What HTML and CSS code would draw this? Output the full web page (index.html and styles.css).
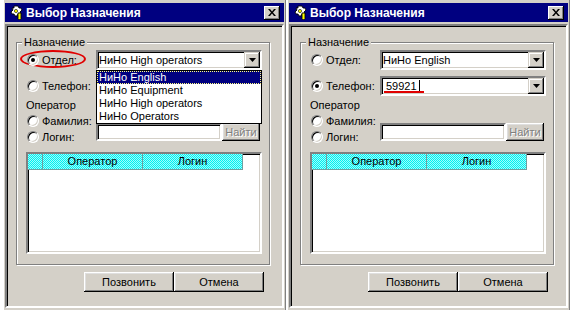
FILE: index.html
```html
<!DOCTYPE html>
<html lang="ru">
<head>
    <meta charset="UTF-8">
    <meta name="viewport" content="width=device-width, initial-scale=1.0">
    <title>Выбор Назначения</title>
    <link rel="stylesheet" href="styles.css">
</head>
<body>
    <div class="desk">
        <!-- окно 1: выбран отдел, список открыт -->
        <div class="window">
            <div class="titlebar">
                <svg class="app-icon" width="14" height="16" viewBox="0 0 14 16">
                    <path d="M4 1h4l1 2h2l1 2-2 2 1 2H8l-1 2H5L4 9H2L1 7l2-2-1-2h2z" fill="#fff" stroke="#000" stroke-width=".9"/>
                    <path d="M8 8h3v5.5L9.5 15 8 13.5z" fill="#ff0" stroke="#000" stroke-width=".9"/>
                    <circle cx="6" cy="6" r="1.6" fill="#ff0" stroke="#000" stroke-width=".6"/>
                </svg>
                <span class="title">Выбор Назначения</span>
                <div class="close">
                    <svg width="8" height="7" viewBox="0 0 8 7"><path d="M0 0h2l2 2.4L6 0h2L5 3.5 8 7H6L4 4.6 2 7H0l3-3.5z" fill="#000"/></svg>
                </div>
            </div>
            <div class="client">
                <fieldset class="group">
                    <legend>Назначение</legend>
                    <div class="row">
                        <div class="mark"></div>
                        <label class="choice"><span class="radio checked"></span>Отдел:</label>
                        <div class="combo field">
                            <span class="combo-text">НиНо High operators</span>
                            <span class="drop-btn"><svg width="7" height="4" viewBox="0 0 7 4"><path d="M0 0h7L3.5 4z" fill="#000"/></svg></span>
                            <ul class="dropdown">
                                <li class="selected">НиНо English</li>
                                <li>НиНо Equipment</li>
                                <li>НиНо High operators</li>
                                <li>НиНо Operators</li>
                            </ul>
                        </div>
                    </div>
                    <div class="row">
                        <label class="choice"><span class="radio"></span>Телефон:</label>
                        <div class="combo field">
                            <span class="combo-text"></span>
                            <span class="drop-btn"><svg width="7" height="4" viewBox="0 0 7 4"><path d="M0 0h7L3.5 4z" fill="#000"/></svg></span>
                        </div>
                    </div>
                    <div class="op-label">Оператор</div>
                    <div class="op">
                        <div class="op-choices">
                            <label class="op-choice"><span class="radio"></span>Фамилия:</label>
                            <label class="op-choice"><span class="radio"></span>Логин:</label>
                        </div>
                        <div class="search">
                            <div class="search-input field"></div>
                            <button class="btn find" disabled>Найти</button>
                        </div>
                    </div>
                    <div class="grid field">
                        <div class="grid-head">
                            <div class="cell first"></div>
                            <div class="cell">Оператор</div>
                            <div class="cell">Логин</div>
                        </div>
                    </div>
                </fieldset>
                <div class="actions">
                    <button class="btn">Позвонить</button>
                    <button class="btn">Отмена</button>
                </div>
            </div>
        </div>

        <!-- окно 2: выбран телефон -->
        <div class="window">
            <div class="titlebar">
                <svg class="app-icon" width="14" height="16" viewBox="0 0 14 16">
                    <path d="M4 1h4l1 2h2l1 2-2 2 1 2H8l-1 2H5L4 9H2L1 7l2-2-1-2h2z" fill="#fff" stroke="#000" stroke-width=".9"/>
                    <path d="M8 8h3v5.5L9.5 15 8 13.5z" fill="#ff0" stroke="#000" stroke-width=".9"/>
                    <circle cx="6" cy="6" r="1.6" fill="#ff0" stroke="#000" stroke-width=".6"/>
                </svg>
                <span class="title">Выбор Назначения</span>
                <div class="close">
                    <svg width="8" height="7" viewBox="0 0 8 7"><path d="M0 0h2l2 2.4L6 0h2L5 3.5 8 7H6L4 4.6 2 7H0l3-3.5z" fill="#000"/></svg>
                </div>
            </div>
            <div class="client">
                <fieldset class="group">
                    <legend>Назначение</legend>
                    <div class="row">
                        <label class="choice"><span class="radio"></span>Отдел:</label>
                        <div class="combo field">
                            <span class="combo-text">НиНо English</span>
                            <span class="drop-btn"><svg width="7" height="4" viewBox="0 0 7 4"><path d="M0 0h7L3.5 4z" fill="#000"/></svg></span>
                        </div>
                    </div>
                    <div class="row">
                        <label class="choice"><span class="radio checked"></span>Телефон:</label>
                        <div class="combo field">
                            <span class="combo-text phone">59921<span class="caret"></span></span>
                            <span class="underline"></span>
                            <span class="drop-btn"><svg width="7" height="4" viewBox="0 0 7 4"><path d="M0 0h7L3.5 4z" fill="#000"/></svg></span>
                        </div>
                    </div>
                    <div class="op-label">Оператор</div>
                    <div class="op">
                        <div class="op-choices">
                            <label class="op-choice"><span class="radio"></span>Фамилия:</label>
                            <label class="op-choice"><span class="radio"></span>Логин:</label>
                        </div>
                        <div class="search">
                            <div class="search-input field"></div>
                            <button class="btn find" disabled>Найти</button>
                        </div>
                    </div>
                    <div class="grid field">
                        <div class="grid-head">
                            <div class="cell first"></div>
                            <div class="cell">Оператор</div>
                            <div class="cell">Логин</div>
                        </div>
                    </div>
                </fieldset>
                <div class="actions">
                    <button class="btn">Позвонить</button>
                    <button class="btn">Отмена</button>
                </div>
            </div>
        </div>
    </div>
</body>
</html>
```

FILE: styles.css
```css
body {
    margin: 0;
    background-color: #ffffff;
    font-family: "Liberation Sans", Arial, sans-serif;
    font-size: 11px;
    color: #000;
}

.desk {
    display: flex;
    gap: 2px;
    padding-left: 4px;
}

.window {
    width: 282px;
    height: 310px;
    box-sizing: border-box;
    background-color: #d4d0c8;
    border-right: 1px solid #808080;
    padding: 3px 1px 2px 1px;
}

.titlebar {
    height: 19px;
    background-color: #000080;
    color: white;
    display: flex;
    align-items: center;
    gap: 2px;
    padding: 0 4px 0 5px;
    font-weight: bold;
    font-size: 12px;
}

.title {
    flex: 1;
}

.close {
    width: 16px;
    height: 14px;
    background-color: #d4d0c8;
    box-shadow: inset -1px -1px #000, inset 1px 1px #fff, inset -2px -2px #808080;
    display: flex;
    align-items: center;
    justify-content: center;
}

.client {
    margin-top: 2px;
    height: 284px;
    box-sizing: border-box;
    border: 2px solid;
    border-color: #808080 #fff #fff #808080;
    box-shadow: inset 1px 1px #000, inset -1px -1px #d4d0c8;
    padding: 10px 0 0 9px;
}

.group {
    width: 254px;
    box-sizing: border-box;
    margin: 0;
    min-width: 0;
    border: 1px solid #808080;
    box-shadow: 1px 1px #fff, inset 1px 1px #fff;
    padding: 1px 7px 10px 9px;
}

.group legend {
    margin-left: -4px;
    padding: 0 2px;
    line-height: 13px;
    background-color: #d4d0c8;
}

.row {
    position: relative;
    display: flex;
    align-items: center;
    height: 20px;
}

.row + .row {
    margin-top: 6px;
}

.choice,
.op-choice {
    display: flex;
    align-items: center;
    gap: 3px;
}

.choice {
    width: 70px;
}

.radio {
    position: relative;
    width: 12px;
    height: 12px;
    box-sizing: border-box;
    margin-left: 1px;
    border-radius: 50%;
    background-color: #fff;
    border: 1px solid;
    border-color: #808080 #fff #fff #808080;
    box-shadow: inset 1px 1px #000, inset -1px -1px #d4d0c8;
}

.radio.checked::after {
    content: "";
    position: absolute;
    left: 3px;
    top: 3px;
    width: 4px;
    height: 4px;
    border-radius: 50%;
    background-color: #000;
}

.mark {
    position: absolute;
    left: -6px;
    top: 0;
    width: 66px;
    height: 18px;
    box-sizing: border-box;
    border: 2px solid #e00000;
    border-radius: 50%;
}

.field {
    box-sizing: border-box;
    background-color: #fff;
    border: 2px solid;
    border-color: #808080 #fff #fff #808080;
    box-shadow: inset 1px 1px #000, inset -1px -1px #d4d0c8;
}

.combo {
    position: relative;
    width: 166px;
    height: 20px;
    display: flex;
    align-items: center;
}

.combo-text {
    flex: 1;
    padding-left: 1px;
    white-space: nowrap;
}

.combo-text.phone {
    padding-left: 4px;
    display: flex;
    align-items: center;
}

.caret {
    width: 1px;
    height: 13px;
    margin-left: 2px;
    background-color: #000;
}

.underline {
    position: absolute;
    left: 2px;
    top: 13px;
    width: 40px;
    height: 2px;
    background-color: #e00000;
}

.drop-btn {
    width: 16px;
    height: 16px;
    box-sizing: border-box;
    background-color: #d4d0c8;
    box-shadow: inset -1px -1px #000, inset 1px 1px #d4d0c8, inset -2px -2px #808080, inset 2px 2px #fff;
    display: flex;
    align-items: center;
    justify-content: center;
}

.dropdown {
    position: absolute;
    left: -2px;
    top: 18px;
    width: 166px;
    box-sizing: border-box;
    margin: 0;
    padding: 0;
    list-style: none;
    background-color: #fff;
    border: 1px solid #000;
    z-index: 2;
}

.dropdown li {
    height: 13px;
    line-height: 13px;
    padding-left: 2px;
}

.dropdown li.selected {
    background-color: #000080;
    color: #fff;
    outline: 1px dotted #ffff80;
    outline-offset: -1px;
}

.op-label {
    margin-top: 1px;
    height: 16px;
    line-height: 16px;
}

.op {
    display: flex;
    height: 32px;
}

.op-choices {
    width: 70px;
}

.op-choice {
    height: 16px;
}

.search {
    display: flex;
    margin-top: 10px;
    height: 18px;
}

.search-input {
    width: 126px;
    height: 18px;
}

.btn {
    font-family: "Liberation Sans", Arial, sans-serif;
    font-size: 11px;
    color: #000;
    background-color: #d4d0c8;
    border: none;
    padding: 0;
    box-shadow: inset -1px -1px #000, inset 1px 1px #fff, inset -2px -2px #808080, inset 2px 2px #dfdfdf;
}

.find {
    width: 38px;
    height: 18px;
    color: #808080;
    text-shadow: 1px 1px #fff;
}

.grid {
    margin-top: 7px;
    height: 102px;
}

.grid-head {
    display: flex;
    height: 16px;
}

.cell {
    width: 100px;
    box-sizing: border-box;
    border-right: 1px solid #6f9f9f;
    border-bottom: 1px solid #6f9f9f;
    background: repeating-conic-gradient(#00f0f0 0 25%, #9ffcfc 0 50%) 0 0 / 2px 2px;
    text-align: center;
    line-height: 15px;
}

.cell.first {
    width: 15px;
}

.actions {
    display: flex;
    margin: 7px 0 0 68px;
}

.actions .btn {
    width: 90px;
    height: 20px;
}
```
